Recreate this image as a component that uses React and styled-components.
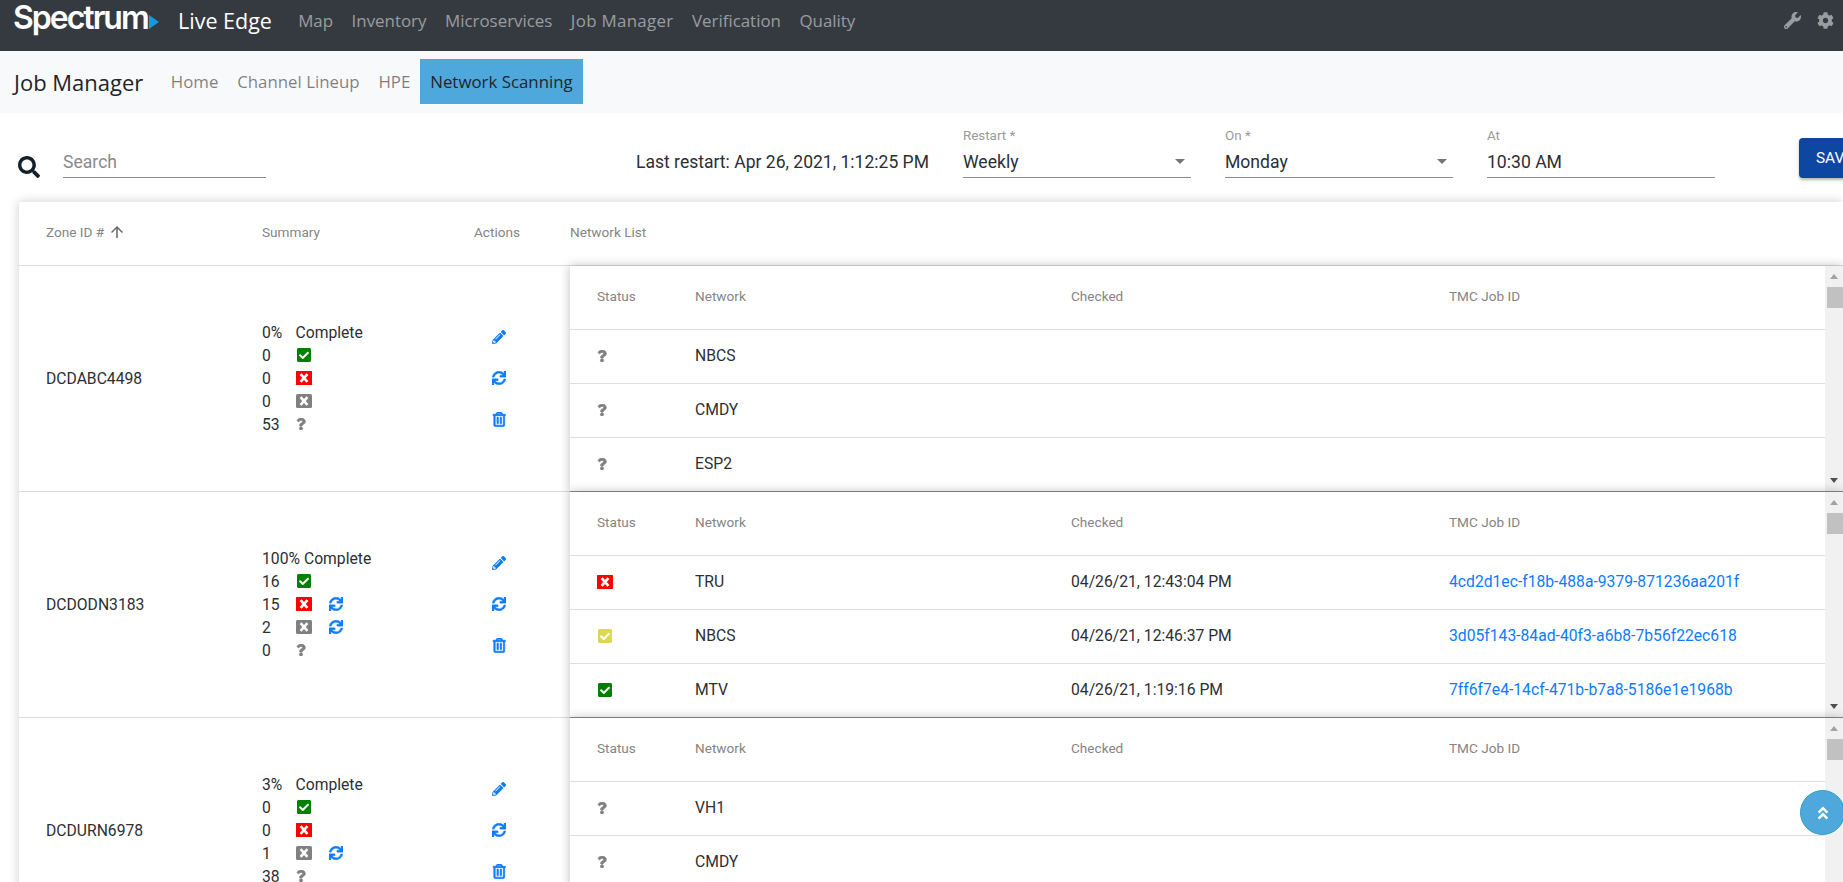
import React from "react";
import styled, { createGlobalStyle } from "styled-components";
import {
  FaCheckSquare,
  FaQuestion,
  FaSync,
  FaPencilAlt,
  FaRegTrashAlt,
  FaWrench,
  FaCog,
  FaSearch,
  FaAngleDoubleUp,
} from "react-icons/fa";
import { MdArrowUpward } from "react-icons/md";

const GlobalStyle = createGlobalStyle`
  html, body {
    margin: 0;
    height: 882px;
    overflow: hidden;
    background: #fff;
    font-family: Roboto, "Liberation Sans", sans-serif;
    color: #2b2f33;
  }
`;

const zones = [
  {
    id: "DCDABC4498",
    percent: "0%",
    counts: [
      { n: 0, kind: "done" },
      { n: 0, kind: "failed" },
      { n: 0, kind: "skipped" },
      { n: 53, kind: "unknown" },
    ],
    networks: [
      { status: "unknown", name: "NBCS" },
      { status: "unknown", name: "CMDY" },
      { status: "unknown", name: "ESP2" },
    ],
  },
  {
    id: "DCDODN3183",
    percent: "100%",
    counts: [
      { n: 16, kind: "done" },
      { n: 15, kind: "failed", retry: true },
      { n: 2, kind: "skipped", retry: true },
      { n: 0, kind: "unknown" },
    ],
    networks: [
      {
        status: "failed",
        name: "TRU",
        checked: "04/26/21, 12:43:04 PM",
        job: "4cd2d1ec-f18b-488a-9379-871236aa201f",
      },
      {
        status: "warning",
        name: "NBCS",
        checked: "04/26/21, 12:46:37 PM",
        job: "3d05f143-84ad-40f3-a6b8-7b56f22ec618",
      },
      {
        status: "done",
        name: "MTV",
        checked: "04/26/21, 1:19:16 PM",
        job: "7ff6f7e4-14cf-471b-b7a8-5186e1e1968b",
      },
    ],
  },
  {
    id: "DCDURN6978",
    percent: "3%",
    counts: [
      { n: 0, kind: "done" },
      { n: 0, kind: "failed" },
      { n: 1, kind: "skipped", retry: true },
      { n: 38, kind: "unknown" },
    ],
    networks: [
      { status: "unknown", name: "VH1" },
      { status: "unknown", name: "CMDY" },
    ],
  },
];

// rectangle with a cross, the icon font version has no react-icons equal
function CloseIcon({ color, radius }) {
  return (
    <svg width="16" height="14" viewBox="0 0 16 14">
      <rect width="16" height="14" rx={radius} fill={color} />
      <path d="M4.6 3.2 L11.4 10.8 M11.4 3.2 L4.6 10.8" stroke="#fff" strokeWidth="2.7" />
    </svg>
  );
}

function StatusIcon({ kind }) {
  if (kind === "done") return <CheckIcon $color="#008000" />;
  if (kind === "warning") return <CheckIcon $color="#dcd94f" />;
  if (kind === "failed") return <CloseIcon color="#ff0000" radius="0.5" />;
  if (kind === "skipped") return <CloseIcon color="#808080" radius="1.5" />;
  return <QuestionIcon />;
}

export default function App() {
  return (
    <>
      <GlobalStyle />
      <Navbar>
        <Logo>
          <LogoWord>Spectrum</LogoWord>
          <svg width="10" height="14" viewBox="0 0 10 14">
            <path d="M0 0 L10 7 L0 14 Z" fill="#0f9bdc" />
          </svg>
        </Logo>
        <AppName>Live Edge</AppName>
        <NavLink>Map</NavLink>
        <NavLink>Inventory</NavLink>
        <NavLink>Microservices</NavLink>
        <NavLink $spread>Job Manager</NavLink>
        <NavLink>Verification</NavLink>
        <NavLink>Quality</NavLink>
        <NavTools>
          <FaWrench />
          <FaCog />
        </NavTools>
      </Navbar>

      <SubNav>
        <SubTitle>Job Manager</SubTitle>
        <SubLink>Home</SubLink>
        <SubLink>Channel Lineup</SubLink>
        <SubLink>HPE</SubLink>
        <SubLink $active>Network Scanning</SubLink>
      </SubNav>

      <Toolbar>
        <SearchIcon />
        <Field $width="203px">
          <Placeholder>Search</Placeholder>
        </Field>
        <LastRestart>Last restart: Apr 26, 2021, 1:12:25 PM</LastRestart>
        <Field $width="228px">
          <FieldLabel>Restart *</FieldLabel>
          <FieldValue>
            Weekly
            <Caret />
          </FieldValue>
        </Field>
        <Field $width="228px">
          <FieldLabel>On *</FieldLabel>
          <FieldValue>
            Monday
            <Caret />
          </FieldValue>
        </Field>
        <Field $width="228px">
          <FieldLabel>At</FieldLabel>
          <FieldValue>10:30 AM</FieldValue>
        </Field>
        <SaveButton>SAVE</SaveButton>
      </Toolbar>

      <Card>
        <CardHeader>
          <HeadCell>
            Zone ID #
            <SortArrow />
          </HeadCell>
          <HeadCell>Summary</HeadCell>
          <HeadCell>Actions</HeadCell>
          <HeadCell>Network List</HeadCell>
        </CardHeader>

        {zones.map((zone) => (
          <ZoneRow key={zone.id}>
            <ZoneId>{zone.id}</ZoneId>
            <Summary>
              <SummaryLine>
                <Count>{zone.percent}</Count>
                Complete
              </SummaryLine>
              {zone.counts.map((c) => (
                <SummaryLine key={c.kind}>
                  <Count>{c.n}</Count>
                  <IconSlot>
                    <StatusIcon kind={c.kind} />
                  </IconSlot>
                  {c.retry && <RetryIcon />}
                </SummaryLine>
              ))}
            </Summary>
            <Actions>
              <FaPencilAlt />
              <RetryIcon />
              <TrashIcon />
            </Actions>
            <NetworkPanel>
              <NetworkTable>
                <NetworkHead>
                  <span>Status</span>
                  <span>Network</span>
                  <span>Checked</span>
                  <span>TMC Job ID</span>
                </NetworkHead>
                {zone.networks.map((net) => (
                  <NetworkRow key={net.name}>
                    <StatusCell>
                      <StatusIcon kind={net.status} />
                    </StatusCell>
                    <span>{net.name}</span>
                    <span>{net.checked}</span>
                    <JobLink>{net.job}</JobLink>
                  </NetworkRow>
                ))}
              </NetworkTable>
              <ScrollRail>
                <ScrollButton>
                  <ArrowUp />
                </ScrollButton>
                <ScrollThumb />
                <ScrollButton $bottom>
                  <ArrowDown />
                </ScrollButton>
              </ScrollRail>
            </NetworkPanel>
          </ZoneRow>
        ))}
      </Card>

      <BackToTop>
        <FaAngleDoubleUp />
      </BackToTop>
    </>
  );
}

const Navbar = styled.nav`
  height: 51px;
  box-sizing: border-box;
  background: #343a40;
  display: flex;
  align-items: center;
  padding: 0 0 11px 13px;
  font-family: "Open Sans", "Liberation Sans", sans-serif;
`;

const Logo = styled.div`
  width: 156px;
  flex: none;
  display: flex;
  align-items: center;
  gap: 1px;
  svg {
    margin-top: 4px;
  }
`;

const LogoWord = styled.span`
  font-family: Inter, "Liberation Sans", sans-serif;
  font-size: 32px;
  font-weight: 600;
  letter-spacing: -2px;
  line-height: 34px;
  color: #fff;
  margin-top: -5px;
`;

const AppName = styled.span`
  margin-left: 9px;
  margin-right: 17px;
  font-size: 21.5px;
  color: #fff;
`;

const NavLink = styled.a`
  padding: 0 9.25px;
  font-size: 16.9px;
  letter-spacing: ${(p) => (p.$spread ? "0.3px" : "0")};
  color: rgba(255, 255, 255, 0.5);
`;

const NavTools = styled.div`
  margin-left: auto;
  margin-right: 9px;
  display: flex;
  gap: 16px;
  color: rgba(255, 255, 255, 0.5);
  font-size: 17px;
`;

const SubNav = styled.div`
  height: 62px;
  box-sizing: border-box;
  padding: 0 0 1px 14px;
  background: #f8f9fa;
  display: flex;
  align-items: center;
  font-family: "Open Sans", "Liberation Sans", sans-serif;
`;

const SubTitle = styled.span`
  font-size: 22px;
  margin-right: 18px;
  color: #212529;
`;

const SubLink = styled.a`
  height: 45px;
  padding: 0 ${(p) => (p.$active ? "10.5px" : "9.4px")};
  display: flex;
  align-items: center;
  font-size: 16.85px;
  background: ${(p) => (p.$active ? "#4fa8dc" : "transparent")};
  color: ${(p) => (p.$active ? "#212529" : "rgba(0, 0, 0, 0.5)")};
`;

const Toolbar = styled.div`
  height: 89px;
  width: 1950px;
  box-sizing: border-box;
  display: flex;
  align-items: flex-end;
  gap: 34px;
  padding: 0 0 24px 18px;
`;

const SearchIcon = styled(FaSearch)`
  font-size: 22px;
  margin-right: -11px;
  color: #14212b;
`;

const Field = styled.div`
  width: ${(p) => p.$width};
  flex: none;
  display: flex;
  flex-direction: column;
`;

const FieldLabel = styled.label`
  font-size: 13.4px;
  line-height: 15px;
  padding-bottom: 1px;
  color: #9a9a9a;
`;

const FieldValue = styled.div`
  height: 34px;
  box-sizing: border-box;
  padding: 2px 6px 0 0;
  border-bottom: 1px solid #8c8c8c;
  display: flex;
  align-items: center;
  justify-content: space-between;
  font-size: 17.6px;
`;

const Placeholder = styled(FieldValue)`
  color: #8a8a8a;
`;

const Caret = styled.span`
  width: 0;
  height: 0;
  border-left: 5px solid transparent;
  border-right: 5px solid transparent;
  border-top: 5px solid #757575;
`;

const LastRestart = styled.span`
  margin-left: 336px;
  height: 34px;
  padding-top: 1px;
  box-sizing: border-box;
  flex: none;
  display: flex;
  align-items: center;
  font-size: 17.55px;
`;

const SaveButton = styled.button`
  margin-left: 50px;
  width: 92px;
  height: 40px;
  flex: none;
  padding: 0 0 0 17px;
  text-align: left;
  border: none;
  border-radius: 4px;
  background: #0d47a1;
  color: #fff;
  font-family: Roboto, sans-serif;
  font-size: 15.4px;
  box-shadow: 0 2px 3px rgba(0, 0, 0, 0.3);
`;

const Card = styled.section`
  margin-left: 19px;
  width: 1824px;
  background: #fff;
  box-shadow: 0 0 10px rgba(0, 0, 0, 0.2);
`;

const Columns = styled.div`
  display: grid;
  grid-template-columns: 243px 212px 96px 1fr;
`;

const CardHeader = styled(Columns)`
  height: 64px;
  box-sizing: border-box;
  padding-bottom: 3px;
  border-bottom: 1px solid #dcdcdc;
  align-items: center;
`;

const HeadCell = styled.span`
  display: flex;
  align-items: center;
  font-size: 13.6px;
  color: #858585;
  &:first-child {
    padding-left: 27px;
  }
`;

const SortArrow = styled(MdArrowUpward)`
  margin-left: 4px;
  font-size: 18px;
  color: #666;
`;

const ZoneRow = styled(Columns)`
  height: 226px;
  align-items: center;
  font-size: 15.7px;
  position: relative;
  &::after {
    content: "";
    position: absolute;
    left: 0;
    right: 0;
    bottom: 0;
    height: 1px;
    background: #dcdcdc;
  }
`;

const ZoneId = styled.div`
  padding: 0 0 2px 27px;
`;

const Summary = styled.div`
  display: flex;
  flex-direction: column;
  padding-bottom: 2px;
`;

const SummaryLine = styled.div`
  height: 23px;
  display: flex;
  align-items: center;
`;

const Count = styled.span`
  min-width: 33.5px;
  padding-right: 4px;
  box-sizing: border-box;
`;

const IconSlot = styled.span`
  width: 33.5px;
  display: flex;
  align-items: center;
`;

const CheckIcon = styled(FaCheckSquare)`
  width: auto;
  height: 16px;
  color: ${(p) => p.$color};
`;

const QuestionIcon = styled(FaQuestion)`
  width: auto;
  height: 12px;
  margin-left: -1px;
  color: #808080;
  stroke: currentColor;
  stroke-width: 30;
`;

const RetryIcon = styled(FaSync)`
  font-size: 14px;
  color: #0d7bff;
  stroke: currentColor;
  stroke-width: 16;
`;

const TrashIcon = styled(FaRegTrashAlt)`
  width: auto;
  height: 14.5px;
  stroke: currentColor;
  stroke-width: 24;
`;

const Actions = styled.div`
  height: 97px;
  margin-bottom: 2px;
  display: flex;
  flex-direction: column;
  justify-content: space-between;
  align-items: flex-start;
  padding-left: 18px;
  color: #0d7bff;
  font-size: 14px;
`;

const NetworkPanel = styled.div`
  height: 226px;
  box-sizing: border-box;
  border-bottom: 1px solid #8a8a8a;
  display: flex;
  overflow: hidden;
  background: #fff;
  box-shadow: 0 0 10px rgba(0, 0, 0, 0.25);
  position: relative;
  z-index: 1;
`;

const NetworkTable = styled.div`
  flex: 1;
  min-width: 0;
`;

const tableColumns = `
  display: grid;
  grid-template-columns: 98px 376px 378px 1fr;
  padding-left: 27px;
  align-items: center;
  box-sizing: border-box;
  border-bottom: 1px solid #dedede;
`;

const NetworkHead = styled.div`
  ${tableColumns}
  height: 64px;
  padding-bottom: 3px;
  font-size: 13.6px;
  color: #858585;
`;

const NetworkRow = styled.div`
  ${tableColumns}
  height: 54px;
  padding-bottom: 2px;
  font-size: 15.7px;
`;

const StatusCell = styled.span`
  display: flex;
  align-items: center;
`;

const JobLink = styled.a`
  color: #0d7bff;
`;

const ScrollRail = styled.div`
  width: 18px;
  flex: none;
  background: #f1f1f1;
  display: flex;
  flex-direction: column;
`;

const ScrollButton = styled.div`
  height: 21px;
  flex: none;
  display: flex;
  align-items: center;
  justify-content: center;
  margin-top: ${(p) => (p.$bottom ? "auto" : "0")};
`;

const ScrollThumb = styled.div`
  height: 21px;
  margin-left: 2px;
  background: #c1c1c1;
`;

const ArrowUp = styled.span`
  border-left: 4.5px solid transparent;
  border-right: 4.5px solid transparent;
  border-bottom: 5px solid #a3a3a3;
`;

const ArrowDown = styled.span`
  border-left: 4.5px solid transparent;
  border-right: 4.5px solid transparent;
  border-top: 5px solid #505050;
`;

const BackToTop = styled.button`
  position: fixed;
  left: 1800px;
  top: 790px;
  width: 45px;
  height: 45px;
  padding: 0;
  border: 1px solid #2f9fc4;
  border-radius: 50%;
  background: #4fa8dc;
  color: #fff;
  font-size: 16px;
  display: flex;
  align-items: center;
  justify-content: center;
  z-index: 5;
`;
